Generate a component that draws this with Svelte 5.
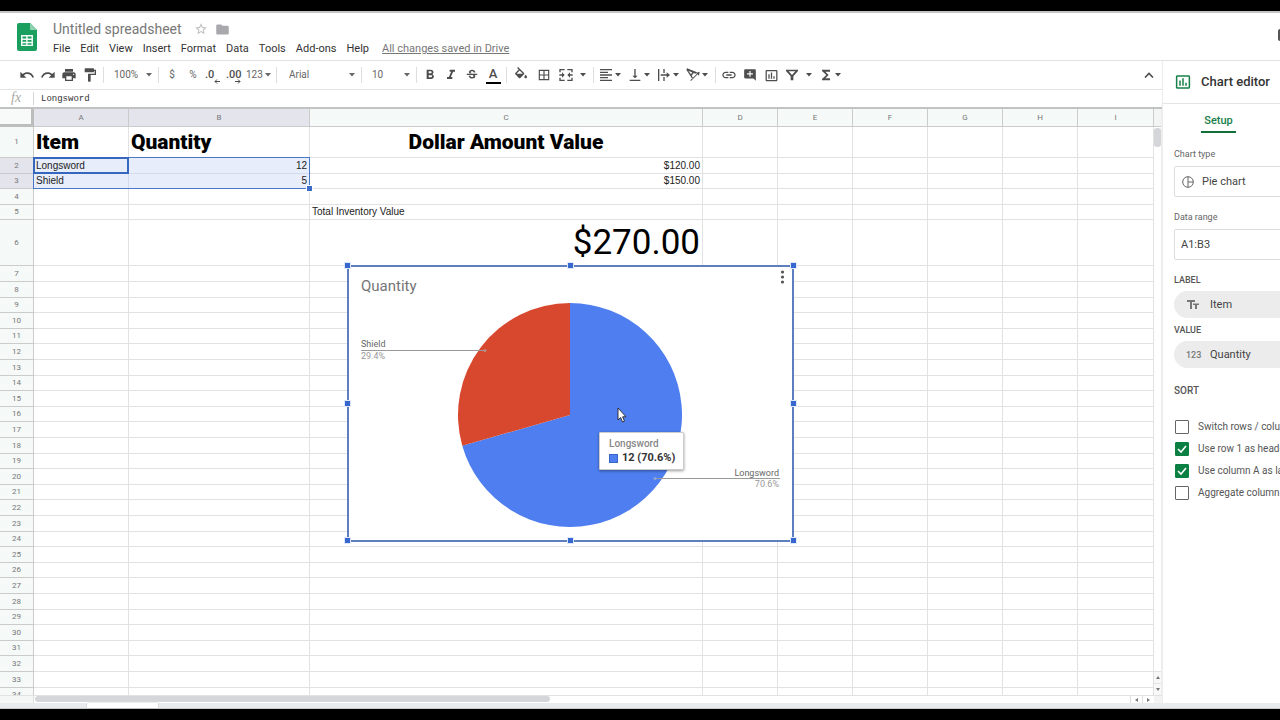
<script>
  const icons = {
    undo: 'M12.5 8c-2.65 0-5.05.99-6.9 2.6L2 7v9h9l-3.62-3.62c1.39-1.16 3.16-1.88 5.12-1.88 3.54 0 6.55 2.31 7.6 5.5l2.37-.78C21.08 11.03 17.15 8 12.5 8z',
    redo: 'M18.4 10.6C16.55 8.99 14.15 8 11.5 8c-4.65 0-8.58 3.03-9.96 7.22L3.9 16c1.05-3.19 4.05-5.5 7.6-5.5 1.95 0 3.73.72 5.12 1.88L13 16h9V7l-3.6 3.6z',
    print: 'M19 8H5c-1.66 0-3 1.34-3 3v6h4v4h12v-4h4v-6c0-1.66-1.34-3-3-3zm-3 11H8v-5h8v5zm3-7c-.55 0-1-.45-1-1s.45-1 1-1 1 .45 1 1-.45 1-1 1zm-1-9H6v4h12V3z',
    paint: 'M18 4V3c0-.55-.45-1-1-1H5c-.55 0-1 .45-1 1v4c0 .55.45 1 1 1h12c.55 0 1-.45 1-1V6h1v4H9v11c0 .55.45 1 1 1h2c.55 0 1-.45 1-1v-9h8V4h-3z',
    bold: 'M15.6 10.79c.97-.67 1.65-1.77 1.65-2.79 0-2.26-1.75-4-4-4H7v14h7.04c2.09 0 3.71-1.7 3.71-3.79 0-1.52-.86-2.82-2.15-3.42zM10 6.5h3c.83 0 1.5.67 1.5 1.5s-.67 1.5-1.5 1.5h-3v-3zm3.5 9H10v-3h3.5c.83 0 1.5.67 1.5 1.5s-.67 1.5-1.5 1.5z',
    italic: 'M10 4v3h2.21l-3.42 8H6v3h8v-3h-2.21l3.42-8H18V4z',
    strike: 'M7.24 8.75c-.26-.48-.39-1.03-.39-1.67 0-.61.13-1.16.4-1.67.26-.5.63-.93 1.11-1.29.48-.35 1.05-.63 1.7-.83.66-.19 1.39-.29 2.18-.29.81 0 1.54.11 2.21.34.66.22 1.23.54 1.69.94.47.4.83.88 1.08 1.43s.38 1.15.38 1.81h-3.01c0-.31-.05-.59-.15-.85-.09-.27-.24-.49-.44-.68-.2-.19-.45-.33-.75-.44-.3-.1-.66-.16-1.06-.16-.39 0-.74.04-1.03.13s-.53.21-.72.36c-.19.16-.34.34-.44.55-.1.21-.15.43-.15.66 0 .48.25.88.74 1.21.38.25.77.48 1.41.7H7.39c-.05-.08-.11-.17-.15-.25zM21 12v-2H3v2h9.62c.18.07.4.14.55.2.37.17.66.34.87.51s.35.36.43.57c.07.2.11.43.11.69 0 .23-.05.45-.14.66-.09.2-.23.38-.42.53-.19.15-.42.26-.71.35-.29.08-.63.13-1.01.13-.43 0-.83-.04-1.18-.13s-.66-.23-.91-.42c-.25-.19-.45-.44-.59-.75s-.25-.76-.25-1.21H6.4c0 .55.08 1.13.24 1.58s.37.85.65 1.21c.28.35.6.66.98.92.37.26.78.48 1.22.65.44.17.9.3 1.38.39.48.08.96.13 1.44.13.8 0 1.53-.09 2.18-.28s1.21-.45 1.67-.79c.46-.34.82-.77 1.07-1.27s.38-1.07.38-1.71c0-.6-.1-1.14-.31-1.61-.05-.11-.11-.23-.17-.33H21z',
    fill: 'M16.56 8.94L7.62 0 6.21 1.41l2.38 2.38-5.15 5.15c-.59.59-.59 1.54 0 2.12l5.5 5.5c.29.29.68.44 1.06.44s.77-.15 1.06-.44l5.5-5.5c.59-.58.59-1.53 0-2.12zM5.21 10L10 5.21 14.79 10H5.21zM19 11.5s-2 2.17-2 3.5c0 1.1.9 2 2 2s2-.9 2-2c0-1.33-2-3.5-2-3.5z',
    borders: 'M3 3v18h18V3H3zm8 16H5v-6h6v6zm0-8H5V5h6v6zm8 8h-6v-6h6v6zm0-8h-6V5h6v6z',
    merge: 'M2 3h8v2H4v3H2zM14 3h8v5h-2V5h-6zM2 16h2v3h6v2H2zM20 16h2v5h-8v-2h6zM2 11h4V8l4 4-4 4v-3H2zM22 11h-4V8l-4 4 4 4v-3h4z',
    align: 'M15 15H3v2h12v-2zm0-8H3v2h12V7zM3 13h18v-2H3v2zm0 8h18v-2H3v2zM3 3v2h18V3H3z',
    valign: 'M16 13h-3V3h-2v10H8l4 4 4-4zM4 19v2h16v-2H4z',
    wrap: 'M3 3h2v18H3zM11 3h2v6h-2zM11 15h2v6h-2zM7 11h9V8l5 4-5 4v-3H7z',
    rotate: 'M2 4l1-2 15 6-2 2-3-1-3 4 2 3-1 2zM5 6l4 5 2-3zM8 20L18 10l-2-1 6-2-1 6-2-2L9 21z',
    link: 'M3.9 12c0-1.71 1.39-3.1 3.1-3.1h4V7H7c-2.76 0-5 2.24-5 5s2.24 5 5 5h4v-1.9H7c-1.71 0-3.1-1.39-3.1-3.1zM8 13h8v-2H8v2zm9-6h-4v1.9h4c1.71 0 3.1 1.39 3.1 3.1s-1.39 3.1-3.1 3.1h-4V17h4c2.76 0 5-2.24 5-5s-2.24-5-5-5z',
    comment: 'M22 4c0-1.1-.9-2-2-2H4c-1.1 0-2 .9-2 2v12c0 1.1.9 2 2 2h14l4 4V4zm-5 7h-4v4h-2v-4H7V9h4V5h2v4h4v2z',
    chart: 'M9 17H7v-7h2v7zm4 0h-2V7h2v10zm4 0h-2v-4h2v4zm2.5 2.1h-15V5h15v14.1zm0-16.1h-15c-1.1 0-2 .9-2 2v14c0 1.1.9 2 2 2h15c1.1 0 2-.9 2-2V5c0-1.1-.9-2-2-2z',
    filter: 'M3 4h18v2l-7 8v6h-4v-6L3 6zM7 6.500l5 5.500 5-5.500z',
    sigma: 'M18 4H6v2l6.500 6L6 18v2h12v-3h-7l5-5-5-5h7z',
    star: 'M22 9.24l-7.19-.62L12 2 9.190 8.630 2 9.240l5.460 4.730L5.820 21 12 17.270 18.180 21l-1.630-7.030L22 9.240zM12 15.400l-3.760 2.270 1-4.280-3.320-2.880 4.380-.380L12 6.100l1.710 4.040 4.380.380-3.320 2.880 1 4.280L12 15.400z',
    folder: 'M10 4H4c-1.100 0-2 .9-2 2v12c0 1.100.9 2 2 2h16c1.100 0 2-.9 2-2V8c0-1.100-.9-2-2-2h-8l-2-2z'
  };

  const menus = ['File', 'Edit', 'View', 'Insert', 'Format', 'Data', 'Tools', 'Add-ons', 'Help'];
  const columns = ['A', 'B', 'C', 'D', 'E', 'F', 'G', 'H', 'I'];
  const cells = {
    A1: { text: 'Item', kind: 'heading' },
    B1: { text: 'Quantity', kind: 'heading' },
    C1: { text: 'Dollar Amount Value', kind: 'heading center' },
    A2: { text: 'Longsword' },
    B2: { text: '12', kind: 'number' },
    C2: { text: '$120.00', kind: 'number' },
    A3: { text: 'Shield' },
    B3: { text: '5', kind: 'number' },
    C3: { text: '$150.00', kind: 'number' },
    C5: { text: 'Total Inventory Value' },
    C6: { text: '$270.00', kind: 'number total' }
  };
  const top = [31, 16, 15, 16, 15, 46];
  const rhythm = [16, 16, 15, 16, 15];
  const rows = Array.from({ length: 34 }, (_, i) => ({
    n: i + 1,
    height: top[i] ?? rhythm[(i - 6) % 5]
  }));
  const inRange = (c, n) => (c === 'A' || c === 'B') && (n === 2 || n === 3);

  let options = $state([
    { label: 'Switch rows / columns', on: false },
    { label: 'Use row 1 as headers', on: true },
    { label: 'Use column A as labels', on: true },
    { label: 'Aggregate column A', on: false }
  ]);

  const slices = [
    { value: 12, color: '#4e7ef0' },
    { value: 5, color: '#d7482f' }
  ];
  const sum = slices.reduce((t, s) => t + s.value, 0);
  const point = (f) => {
    const a = f * 2 * Math.PI;
    return `${223 + 112 * Math.sin(a)} ${150 - 112 * Math.cos(a)}`;
  };
  let at = 0;
  const arcs = slices.map((s) => {
    const from = at / sum;
    at += s.value;
    const to = at / sum;
    return { color: s.color, d: `M223 150L${point(from)}A112 112 0 ${to - from > 0.5 ? 1 : 0} 1 ${point(to)}Z` };
  });
  const handles = ['nw', 'n', 'ne', 'w', 'e', 'sw', 's', 'se'];
</script>

{#snippet icon(name, size = 16)}
  <svg width={size} height={size} viewBox="0 0 24 24" fill="currentColor" fill-rule="evenodd" aria-hidden="true"><path d={icons[name]} /></svg>
{/snippet}

{#snippet caret()}
  <svg class="caret" width="6" height="4" viewBox="0 0 6 4" fill="currentColor" aria-hidden="true"><path d="M0 0h6L3 3.500z" /></svg>
{/snippet}

{#snippet tool(name, size = 16)}
  <button class="tool" aria-label={name}>{@render icon(name, size)}</button>
{/snippet}

{#snippet drop(name, wide = false)}
  <button class="tool drop" class:wide aria-label={name}>{@render icon(name)}{@render caret()}</button>
{/snippet}

<div class="screen">
  <header>
    <svg class="logo" width="20" height="28" viewBox="0 0 20 28" aria-hidden="true">
      <path d="M2 0h11l7 7v19a2 2 0 0 1-2 2H2a2 2 0 0 1-2-2V2a2 2 0 0 1 2-2z" fill="#1a9f5e" />
      <path d="M13 0l7 7h-7z" fill="#8ed1b1" />
      <path d="M4 12h12v11H4zM5.500 13.500v2h3.700v-2zm5.200 0v2h3.800v-2zM5.500 17v1.800h3.700V17zm5.200 0v1.800h3.800V17zM5.500 20.200v1.600h3.700v-1.600zm5.200 0v1.600h3.800v-1.600z" fill="#f1fbf6" fill-rule="evenodd" />
    </svg>
    <div class="doc">
      <div class="title-row">
        <h1>Untitled spreadsheet</h1>
        <button class="star" aria-label="Star">{@render icon('star', 14)}</button>
        <button class="folder" aria-label="Move">{@render icon('folder', 15)}</button>
      </div>
      <nav>
        {#each menus as m}<button>{m}</button>{/each}
        <a href="#saved">All changes saved in Drive</a>
      </nav>
    </div>
    <div class="activity"></div>
  </header>

  <div class="workspace">
    <main>
      <div class="toolbar">
        {@render tool('undo')}
        {@render tool('redo')}
        {@render tool('print')}
        {@render tool('paint')}
        <i class="sep"></i>
        <label class="pick"><select aria-label="Zoom"><option>100%</option></select>{@render caret()}</label>
        <i class="sep"></i>
        <button class="tool small">$</button>
        <button class="tool small">%</button>
        <button class="tool decimal">.0<svg width="6" height="5" viewBox="0 0 6 5" aria-hidden="true"><path d="M6 2.500H1M3 .5l-2 2 2 2" fill="none" stroke="currentColor" /></svg></button>
        <button class="tool decimal">.00<svg width="6" height="5" viewBox="0 0 6 5" aria-hidden="true"><path d="M0 2.500h5M3 .5l2 2-2 2" fill="none" stroke="currentColor" /></svg></button>
        <button class="tool formats">123{@render caret()}</button>
        <i class="sep"></i>
        <label class="pick font"><select aria-label="Font"><option>Arial</option></select>{@render caret()}</label>
        <i class="sep"></i>
        <label class="pick"><select aria-label="Font size"><option>10</option></select>{@render caret()}</label>
        <i class="sep"></i>
        {@render tool('bold')}
        {@render tool('italic')}
        {@render tool('strike', 14)}
        <button class="tool color"><span>A</span></button>
        <i class="sep"></i>
        <button class="tool roomy" aria-label="fill">{@render icon('fill')}</button>
        <button class="tool roomy" aria-label="borders">{@render icon('borders', 14)}</button>
        {@render drop('merge', true)}
        <i class="sep"></i>
        {@render drop('align')}
        {@render drop('valign')}
        {@render drop('wrap')}
        {@render drop('rotate')}
        <i class="sep"></i>
        {@render tool('link')}
        {@render tool('comment', 14)}
        {@render tool('chart', 15)}
        {@render drop('filter', true)}
        {@render drop('sigma')}
        <button class="tool collapse" aria-label="Hide the menus">
          <svg width="10" height="6" viewBox="0 0 10 6" aria-hidden="true"><path d="M1 5.500l4-4 4 4" fill="none" stroke="currentColor" stroke-width="1.600" /></svg>
        </button>
      </div>

      <div class="formula">
        <span class="fx">fx</span>
        <input aria-label="Formula" value="Longsword" />
      </div>

      <div class="sheet">
        <div class="grid">
          <table>
            <colgroup>
              <col class="c-head" /><col class="c-a" /><col class="c-b" /><col class="c-c" />
              <col class="c-n" /><col class="c-n" /><col class="c-n" /><col class="c-n" /><col class="c-n" /><col />
            </colgroup>
            <thead>
              <tr>
                <td class="corner"></td>
                {#each columns as c}<th scope="col" class:picked={c < 'C'}>{c}</th>{/each}
              </tr>
            </thead>
            <tbody>
              {#each rows as r}
                <tr style:height="{r.height}px">
                  <th scope="row" class:picked={r.n === 2 || r.n === 3}>{r.n}</th>
                  {#each columns as c}
                    {@const cell = cells[c + r.n]}
                    <td class={cell?.kind} class:range={inRange(c, r.n)}>{cell?.text ?? ''}</td>
                  {/each}
                </tr>
              {/each}
            </tbody>
          </table>

          <div class="selection"><div class="active"></div></div>

          <section class="chart">
            <svg width="443" height="272" viewBox="2 2 443 272" aria-hidden="true">
              {#each arcs as a}<path d={a.d} fill={a.color} />{/each}
              <text x="14" y="26" class="c-title">Quantity</text>
              <path d="M14 85.500H138" stroke="#999" />
              <circle cx="138" cy="85.500" r="1.500" fill="#b98d86" />
              <path d="M308 213.500H433" stroke="#999" />
              <circle cx="308" cy="213.500" r="1.500" fill="#8fa4d8" />
              <text x="14" y="82" class="c-name">Shield</text>
              <text x="14" y="94" class="c-share">29.4%</text>
              <text x="432" y="211" class="c-name" text-anchor="end">Longsword</text>
              <text x="432" y="222" class="c-share" text-anchor="end">70.6%</text>
              <g fill="#555"><circle cx="435.500" cy="7" r="1.600" /><circle cx="435.500" cy="12" r="1.600" /><circle cx="435.500" cy="17" r="1.600" /></g>
            </svg>
            {#each handles as h}<i class="handle {h}"></i>{/each}
            <div class="tip">
              <span>Longsword</span>
              <strong><i></i>12 (70.6%)</strong>
            </div>
            <svg class="pointer" width="10" height="16" viewBox="0 0 10 16" aria-hidden="true">
              <path d="M1 1v12l2.600-2.500L5.500 15l2-.9-1.900-4.300H9z" fill="#fff" stroke="#222" stroke-width=".9" />
            </svg>
          </section>
        </div>

        <div class="vscroll">
          <i class="cap"></i>
          <i class="thumb"></i>
          <button aria-label="Scroll up"><svg width="4" height="3" viewBox="0 0 4 3"><path d="M0 3h4L2 0z" fill="#777" /></svg></button>
          <button aria-label="Scroll down"><svg width="4" height="3" viewBox="0 0 4 3"><path d="M0 0h4L2 3z" fill="#777" /></svg></button>
        </div>
      </div>

      <div class="hscroll">
        <i class="stub"></i>
        <div class="track"><i class="thumb"></i></div>
        <button aria-label="Scroll left"><svg width="3" height="4" viewBox="0 0 3 4"><path d="M3 0v4L0 2z" fill="#777" /></svg></button>
        <button aria-label="Scroll right"><svg width="3" height="4" viewBox="0 0 3 4"><path d="M0 0v4l3-2z" fill="#777" /></svg></button>
        <i class="end"></i>
      </div>
    </main>

    <aside>
      <h2>{@render icon('chart', 18)}Chart editor</h2>
      <div class="tabs"><button>Setup</button></div>
      <div class="fields">
        <label for="type">Chart type</label>
        <div class="box">
          <svg width="12" height="12" viewBox="0 0 12 12" fill="none" stroke="#666" aria-hidden="true"><circle cx="6" cy="6" r="5.300" /><path d="M6 .7v10.600M6 6h5.300" /></svg>
          <select id="type"><option>Pie chart</option></select>
        </div>
        <label for="range">Data range</label>
        <div class="box"><input id="range" value="A1:B3" /></div>
        <h3>LABEL</h3>
        <button class="pill">
          <svg width="14" height="12" viewBox="0 0 14 12" fill="#777" aria-hidden="true"><path d="M1 1h8v2H6v7H4V3H1zM7 4.500h6V6h-2v4H9V6H7z" /></svg>
          Item
        </button>
        <h3>VALUE</h3>
        <button class="pill"><span class="digits">123</span>Quantity</button>
        <h3 class="sort">SORT</h3>
        <div class="checks">
          {#each options as o}
            <label><input type="checkbox" bind:checked={o.on} />{o.label}</label>
          {/each}
        </div>
      </div>
    </aside>
  </div>

  <footer><i class="tab"></i></footer>
</div>

<style>
  :global(body) { background: #000; }
  * { box-sizing: border-box; }
  button, select, input { border: 0; padding: 0; margin: 0; background: none; font: inherit; color: inherit; border-radius: 0; outline: 0; }
  select { appearance: none; }
  svg { display: block; flex: none; }
  i { display: block; flex: none; }
  h1, h2, h3 { margin: 0; font-weight: 400; }

  .screen {
    height: 100vh;
    display: flex;
    flex-direction: column;
    border-top: 11px solid #000;
    border-bottom: 11px solid #000;
    background: #fff;
    font: 11px/14px Roboto, "Liberation Sans", sans-serif;
    color: #444;
    overflow: hidden;
    white-space: nowrap;
  }

  header { display: flex; flex: none; height: 50px; border-top: 2px solid #c4c4c4; border-bottom: 1px solid #e2e2e2; }
  .logo { margin: 10px 16px 0 17px; }
  .doc { flex: 1; padding-top: 7px; }
  .title-row { display: flex; align-items: center; height: 18px; }
  h1 { font-size: 14px; line-height: 18px; color: #777; }
  .star { margin-left: 12px; color: #bbb; }
  .folder { margin-left: 7px; color: #a9a9ad; }
  nav { display: flex; gap: 10px; padding-top: 4px; }
  nav button { color: #333; }
  nav a { margin-left: 3px; color: #777; }
  .activity { width: 2px; height: 12px; margin-top: 16px; background: #555; border-radius: 2px 0 0 2px; }

  .workspace { flex: 1; min-height: 0; display: grid; grid-template-columns: minmax(0, 1fr) 118px; }
  main { display: flex; flex-direction: column; min-height: 0; min-width: 0; }

  .toolbar { flex: none; display: flex; align-items: center; gap: 1px; height: 29px; padding-left: 17px; border-bottom: 1px solid #e2e2e2; color: #4d4d4d; font-size: 10px; }
  .tool { flex: none; width: 20px; height: 20px; display: flex; align-items: center; justify-content: center; }
  .roomy { width: 22px; }
  .drop { width: 28px; justify-content: flex-start; padding-left: 1px; gap: 1px; }
  .drop.wide { width: 34px; padding-left: 2px; gap: 6px; }
  .sep { width: 1px; height: 16px; margin: 0 2px; background: #dedede; }
  .pick { flex: none; display: flex; align-items: center; width: 48px; padding: 0 3px 0 7px; color: #666; }
  .pick select { flex: 1; min-width: 0; }
  .pick.font { width: 78px; padding-left: 9px; }
  .small { color: #666; }
  .decimal { font-weight: 500; font-size: 11px; position: relative; justify-content: flex-start; padding-left: 1px; }
  .decimal svg { position: absolute; right: 4px; bottom: 1px; }
  .formats { width: 27px; justify-content: flex-start; gap: 2px; color: #666; }
  .color { font-size: 13px; font-weight: 500; }
  .color span { width: 15px; height: 18px; line-height: 15px; border-bottom: 2px solid #000; }
  .collapse { margin-left: auto; margin-right: 3px; }

  .formula { flex: none; display: flex; align-items: center; height: 19px; border-bottom: 2px solid #c2c2c2; }
  .fx { width: 34px; height: 13px; padding-left: 11px; border-right: 1px solid #d5d5d5; font: italic 14px/12px "Liberation Serif", serif; color: #aaa; }
  .formula input { flex: 1; padding-left: 7px; font: 9px/14px "Liberation Mono", monospace; color: #333; }

  .sheet { flex: 1; min-height: 0; display: flex; }
  .grid { position: relative; flex: 1; min-width: 0; overflow: hidden; }
  table { width: 100%; table-layout: fixed; border-collapse: separate; border-spacing: 0; font: 10px/14px "Liberation Sans", Arial, sans-serif; color: #222; }
  .c-head { width: 34px; }
  .c-a { width: 95px; }
  .c-b { width: 181px; }
  .c-c { width: 393px; }
  .c-n { width: 75px; }
  td, th { padding: 0 2px; border-right: 1px solid #e2e2e2; border-bottom: 1px solid #e2e2e2; }
  th { padding: 0; background: #f5f9f7; border-color: #cbcbcb; font: 8px/14px Roboto, sans-serif; color: #777; }
  thead tr { height: 18px; }
  th.picked { background: #e4e5ec; }
  .corner { border-right: 3px solid #bdbdbd; border-bottom: 3px solid #bdbdbd; background: #f8f9f9; }
  .range { background: #e7edfa; border-color: #d3dcef; }
  .number { text-align: right; }
  .heading { font: 900 21px/28px Impact, Roboto, sans-serif; color: #000; }
  .center { text-align: center; }
  .total { font: 35px/42px Roboto, sans-serif; color: #000; }

  .selection { position: absolute; left: 33px; top: 48px; width: 277px; height: 32px; border: 1px solid #4a78c8; }
  .selection::after { content: ""; position: absolute; right: -3px; bottom: -3px; width: 5px; height: 5px; background: #3c6cc9; outline: 1px solid #fff; }
  .active { width: 96px; height: 17px; margin: -1px; border: 2px solid #3467bd; }

  .chart { position: absolute; left: 347px; top: 156px; width: 447px; height: 277px; border: 2px solid #5d7fbd; background: #fff; }
  .c-title { font-size: 15px; fill: #757575; }
  .c-name { font-size: 9px; fill: #666; }
  .c-share { font-size: 9px; fill: #999; }
  .handle { position: absolute; width: 5px; height: 5px; margin: -3px; background: #3567cf; outline: 1px solid #dfe8fa; }
  .nw, .n, .ne { top: -1px; }
  .w, .e { top: 50%; }
  .sw, .s, .se { top: calc(100% + 1px); }
  .nw, .w, .sw { left: -1px; }
  .n, .s { left: 50%; }
  .ne, .e, .se { left: calc(100% + 2px); }
  .tip { position: absolute; left: 250px; top: 165px; width: 85px; height: 38px; padding: 5px 9px; display: flex; flex-direction: column; background: #fff; border: 1px solid #ccc; border-radius: 1px; box-shadow: 0 1px 3px #0006; font-size: 10px; color: #888; font-weight: 500; line-height: 12px; }
  .tip strong { display: flex; align-items: center; gap: 4px; font-size: 11px; line-height: 16px; color: #333; }
  .tip i { width: 9px; height: 9px; background: #4e7ef0; border: 1px solid #3b66c9; }
  .pointer { position: absolute; left: 268px; top: 140px; }

  .vscroll { flex: none; width: 8px; display: flex; flex-direction: column; align-items: stretch; border-right: 1px solid #eee; }
  .vscroll .cap { height: 18px; background: #f3f4f4; border-bottom: 1px solid #ccc; }
  .vscroll .thumb { height: 19px; margin: 1px 0 auto; border-radius: 3px; background: #d5d6da; }
  .vscroll button { height: 12px; display: grid; place-items: center; border-top: 1px solid #e2e2e2; background: #f8f8f8; }
  .hscroll { flex: none; height: 8px; display: flex; border-top: 1px solid #e2e2e2; }
  .stub { width: 34px; background: #f5f6f6; border-right: 1px solid #ddd; }
  .track { flex: 1; padding-left: 1px; }
  .track .thumb { width: 47%; height: 6px; border-radius: 3px; background: #d5d6da; }
  .hscroll button { width: 12px; display: grid; place-items: center; border-left: 1px solid #ddd; }
  .end { width: 8px; background: #f3f3f3; }

  aside { display: flex; flex-direction: column; min-width: 0; overflow: hidden; border-left: 1px solid #ececec; }
  h2 { display: flex; align-items: center; gap: 9px; height: 43px; padding-left: 11px; border-bottom: 1px solid #e4e4e4; font: 500 13px/16px Roboto, sans-serif; color: #333; }
  h2 :global(svg) { color: #188048; }
  .tabs { padding: 7px 0 0 38px; }
  .tabs button { width: 35px; height: 22px; border-bottom: 2px solid #11703a; color: #188048; font-weight: 500; font-size: 11px; }
  .fields { padding: 15px 0 0 11px; display: flex; flex-direction: column; }
  .fields > label { font-size: 9px; line-height: 12px; color: #666; }
  .box { display: flex; align-items: center; gap: 8px; flex: none; width: 200px; height: 31px; margin: 6px 0 14px; padding: 0 7px; border: 1px solid #dcdcdc; border-radius: 2px; }
  .box input { padding: 0; width: 100%; }
  .box input:first-child { margin-left: -1px; }
  h3 { font-size: 9px; line-height: 12px; font-weight: 500; color: #555; }
  .pill { display: flex; align-items: center; gap: 10px; width: 200px; height: 27px; margin: 5px 0 6px; padding: 0 12px; border-radius: 14px; background: #ececec; }
  .digits { width: 14px; font-size: 9px; font-weight: 500; color: #777; }
  .sort { font-size: 10px; line-height: 14px; padding-top: 10px; }
  .checks { display: flex; flex-direction: column; padding-top: 18px; font-size: 10px; }
  .checks label { display: flex; align-items: center; gap: 9px; height: 22px; color: #555; }
  .checks input { appearance: none; flex: none; width: 14px; height: 14px; margin-left: 1px; border: 1px solid #666; border-radius: 1px; }
  .checks input:checked { border-color: #0b8043; background: #0b8043 url("data:image/svg+xml,%3Csvg xmlns='http://www.w3.org/2000/svg' viewBox='0 0 12 12'%3E%3Cpath d='M2 6l3 3 5-6' fill='none' stroke='white' stroke-width='1.600'/%3E%3C/svg%3E") center / 12px no-repeat; }

  footer { flex: none; height: 6px; background: #e9eaed; border-bottom: 1px solid #c8c8c8; }
  .tab { width: 71px; height: 5px; margin-left: 87px; background: #fff; box-shadow: 0 0 1px #999; }
</style>
